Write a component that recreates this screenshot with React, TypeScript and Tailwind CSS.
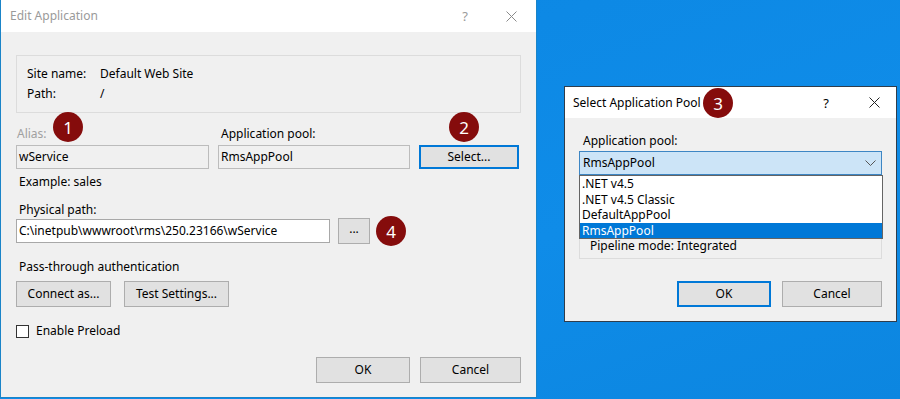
import React from "react";

const CloseX = ({ color }: { color: string }) => (
  <svg width="11" height="11" viewBox="0 0 11 11" className="block">
    <path d="M0.5 0.5 L10.5 10.5 M10.5 0.5 L0.5 10.5" stroke={color} strokeWidth="1" fill="none" />
  </svg>
);

export default function App() {
  return (
    <div className="relative w-[900px] h-[399px] overflow-hidden bg-[linear-gradient(160deg,#0b86e2_0%,#0f8ce8_60%,#0c86e0_100%)] font-['Segoe_UI','Noto_Sans',sans-serif] text-[12px] text-black">
      {/* Main dialog: Edit Application */}
      <div className="absolute left-0 top-0 w-[537px] h-[398px] border-x border-b border-[#1a84c8] bg-[#f0f0f0] flex flex-col">
        <div className="h-[32px] bg-white flex items-center pl-[9px] pr-[19px] shrink-0">
          <span className="text-[#9a9a9a] leading-[16px]">Edit Application</span>
          <span className="ml-auto text-[#9a9a9a] text-[13px] leading-[16px]">?</span>
          <span className="ml-[38px]"><CloseX color="#8a8a8a" /></span>
        </div>
        <div className="flex flex-col px-[15px]">
          <div className="mt-[23px] h-[58px] border border-[#dcdcdc] pt-[8px] pl-[10px]">
            <div className="flex leading-[20px]">
              <span className="w-[73px]">Site name:</span>
              <span>Default Web Site</span>
            </div>
            <div className="flex leading-[20px]">
              <span className="w-[73px]">Path:</span>
              <span>/</span>
            </div>
          </div>
          <div className="mt-[13px] flex leading-[16px] h-[16px]">
            <span className="w-[202px] pl-[1px] text-[#a0a0a0]">Alias:</span>
            <span className="pl-[3px]">Application pool:</span>
          </div>
          <div className="mt-[3px] flex gap-[9px] h-[24px]">
            <div className="w-[193px] h-[24px] border border-[#bcbcbc] bg-[#f0f0f0] flex items-center pl-[2px]">wService</div>
            <div className="w-[192px] h-[24px] border border-[#bcbcbc] bg-[#f0f0f0] flex items-center pl-[2px]">RmsAppPool</div>
            <div className="w-[100px] h-[24px] border-2 border-[#0078d7] bg-[#e1e1e1] flex items-center justify-center">Select...</div>
          </div>
          <div className="mt-[5px] leading-[16px] pl-[3px]">Example: sales</div>
          <div className="mt-[12px] leading-[16px] pl-[3px]">Physical path:</div>
          <div className="flex items-center h-[26px] gap-[8px]">
            <div className="w-[314px] h-[24px] border border-[#a8a8a8] bg-white flex items-center pl-[2px]">C:\inetpub\wwwroot\rms\250.23166\wService</div>
            <div className="w-[32px] h-[26px] border border-[#adadad] bg-[#e1e1e1] flex items-center justify-center leading-[10px] pb-[4px]">...</div>
          </div>
          <div className="mt-[15px] leading-[16px] pl-[3px]">Pass-through authentication</div>
          <div className="mt-[6px] flex gap-[13px]">
            <div className="w-[95px] h-[26px] border border-[#adadad] bg-[#e1e1e1] flex items-center justify-center">Connect as...</div>
            <div className="w-[105px] h-[26px] border border-[#adadad] bg-[#e1e1e1] flex items-center justify-center">Test Settings...</div>
          </div>
          <div className="mt-[16px] flex items-center h-[16px]">
            <div className="w-[13px] h-[13px] border border-[#333333] bg-white" />
            <span className="ml-[7px] leading-[16px]">Enable Preload</span>
          </div>
          <div className="mt-[18px] flex justify-end gap-[10px]">
            <div className="w-[94px] h-[26px] border border-[#adadad] bg-[#e1e1e1] flex items-center justify-center">OK</div>
            <div className="w-[101px] h-[26px] border border-[#adadad] bg-[#e1e1e1] flex items-center justify-center">Cancel</div>
          </div>
        </div>
      </div>

      {/* Select Application Pool dialog */}
      <div className="absolute left-[564px] top-[86px] w-[333px] h-[236px] border border-[#2f3d4c] bg-[#f0f0f0] flex flex-col">
        <div className="h-[31px] bg-white flex items-center pl-[8px] pr-[16px] shrink-0">
          <span className="leading-[16px]">Select Application Pool</span>
          <span className="ml-auto text-[13px] leading-[16px]">?</span>
          <span className="ml-[40px]"><CloseX color="#222222" /></span>
        </div>
        <div className="relative flex flex-col px-[14px]">
          <div className="mt-[15px] leading-[16px] pl-[4px]">Application pool:</div>
          <div className="mt-[2px] h-[24px] border border-[#3d86c4] bg-[#cce4f7] flex items-center pl-[3px] pr-[5px]">
            <span>RmsAppPool</span>
            <svg width="11" height="7" viewBox="0 0 11 7" className="ml-auto">
              <path d="M0.5 0.5 L5.5 5.5 L10.5 0.5" stroke="#555555" strokeWidth="1" fill="none" />
            </svg>
          </div>
          <div className="mt-[10px] h-[74px] border border-[#dcdcdc] flex flex-col justify-end pl-[10px] pb-[5px]">
            <div className="leading-[14px]">Pipeline mode: Integrated</div>
          </div>
          <div className="mt-[22px] flex justify-end gap-[11px]">
            <div className="w-[94px] h-[26px] border-2 border-[#0078d7] bg-[#e1e1e1] flex items-center justify-center">OK</div>
            <div className="w-[100px] h-[26px] border border-[#adadad] bg-[#e1e1e1] flex items-center justify-center">Cancel</div>
          </div>
          <div className="absolute left-[14px] top-[57px] w-[304px] border border-[#646464] bg-white flex flex-col">
            <div className="h-[15.5px] leading-[15.5px] pl-[2px]">.NET v4.5</div>
            <div className="h-[15.5px] leading-[15.5px] pl-[2px]">.NET v4.5 Classic</div>
            <div className="h-[15.5px] leading-[15.5px] pl-[2px]">DefaultAppPool</div>
            <div className="h-[15.5px] leading-[15.5px] pl-[2px] bg-[#0078d7] text-white">RmsAppPool</div>
          </div>
        </div>
      </div>

      {/* Badges */}
      <div className="absolute left-[53px] top-[112px] w-[30px] h-[30px] rounded-full bg-[#850c0c] text-white flex items-center justify-center text-[17px] leading-none">1</div>
      <div className="absolute left-[449px] top-[112px] w-[30px] h-[30px] rounded-full bg-[#850c0c] text-white flex items-center justify-center text-[17px] leading-none">2</div>
      <div className="absolute left-[703px] top-[88px] w-[30px] h-[30px] rounded-full bg-[#850c0c] text-white flex items-center justify-center text-[17px] leading-none">3</div>
      <div className="absolute left-[376px] top-[216px] w-[30px] h-[30px] rounded-full bg-[#850c0c] text-white flex items-center justify-center text-[17px] leading-none">4</div>
    </div>
  );
}
